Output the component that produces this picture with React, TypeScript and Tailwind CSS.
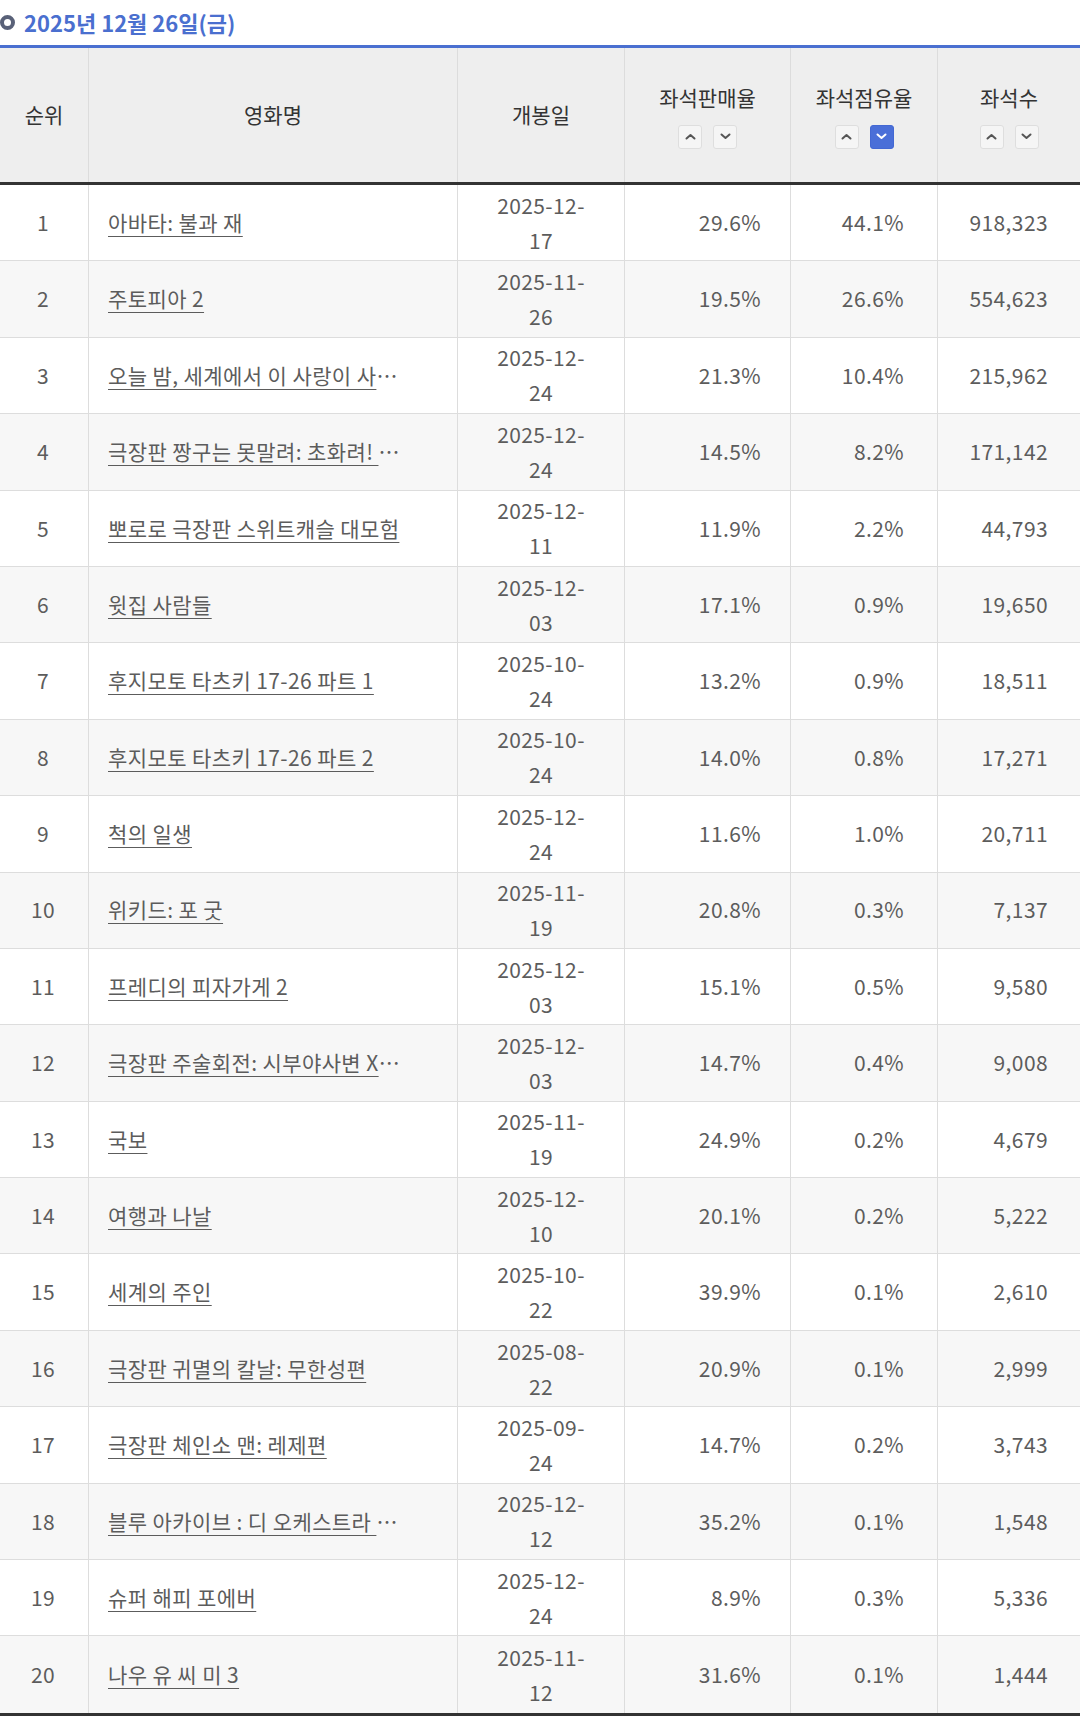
import React from "react";

type Row = {
  rank: number;
  title: string;
  cut?: boolean;
  date: string;
  sales: string;
  share: string;
  seats: string;
};

const ROWS: Row[] = [
  { rank: 1, title: "아바타: 불과 재", date: "2025-12-17", sales: "29.6%", share: "44.1%", seats: "918,323" },
  { rank: 2, title: "주토피아 2", date: "2025-11-26", sales: "19.5%", share: "26.6%", seats: "554,623" },
  { rank: 3, title: "오늘 밤, 세계에서 이 사랑이 사", cut: true, date: "2025-12-24", sales: "21.3%", share: "10.4%", seats: "215,962" },
  { rank: 4, title: "극장판 짱구는 못말려: 초화려! ", cut: true, date: "2025-12-24", sales: "14.5%", share: "8.2%", seats: "171,142" },
  { rank: 5, title: "뽀로로 극장판 스위트캐슬 대모험", date: "2025-12-11", sales: "11.9%", share: "2.2%", seats: "44,793" },
  { rank: 6, title: "윗집 사람들", date: "2025-12-03", sales: "17.1%", share: "0.9%", seats: "19,650" },
  { rank: 7, title: "후지모토 타츠키 17-26 파트 1", date: "2025-10-24", sales: "13.2%", share: "0.9%", seats: "18,511" },
  { rank: 8, title: "후지모토 타츠키 17-26 파트 2", date: "2025-10-24", sales: "14.0%", share: "0.8%", seats: "17,271" },
  { rank: 9, title: "척의 일생", date: "2025-12-24", sales: "11.6%", share: "1.0%", seats: "20,711" },
  { rank: 10, title: "위키드: 포 굿", date: "2025-11-19", sales: "20.8%", share: "0.3%", seats: "7,137" },
  { rank: 11, title: "프레디의 피자가게 2", date: "2025-12-03", sales: "15.1%", share: "0.5%", seats: "9,580" },
  { rank: 12, title: "극장판 주술회전: 시부야사변 X", cut: true, date: "2025-12-03", sales: "14.7%", share: "0.4%", seats: "9,008" },
  { rank: 13, title: "국보", date: "2025-11-19", sales: "24.9%", share: "0.2%", seats: "4,679" },
  { rank: 14, title: "여행과 나날", date: "2025-12-10", sales: "20.1%", share: "0.2%", seats: "5,222" },
  { rank: 15, title: "세계의 주인", date: "2025-10-22", sales: "39.9%", share: "0.1%", seats: "2,610" },
  { rank: 16, title: "극장판 귀멸의 칼날: 무한성편", date: "2025-08-22", sales: "20.9%", share: "0.1%", seats: "2,999" },
  { rank: 17, title: "극장판 체인소 맨: 레제편", date: "2025-09-24", sales: "14.7%", share: "0.2%", seats: "3,743" },
  { rank: 18, title: "블루 아카이브 : 디 오케스트라 ", cut: true, date: "2025-12-12", sales: "35.2%", share: "0.1%", seats: "1,548" },
  { rank: 19, title: "슈퍼 해피 포에버", date: "2025-12-24", sales: "8.9%", share: "0.3%", seats: "5,336" },
  { rank: 20, title: "나우 유 씨 미 3", date: "2025-11-12", sales: "31.6%", share: "0.1%", seats: "1,444" },
];

const COLS = "grid grid-cols-[89px_369px_167px_166px_147px_142px]";

function Caret({ down, active }: { down?: boolean; active?: boolean }) {
  return (
    <button
      type="button"
      className={`flex h-[24px] w-[24px] items-center justify-center rounded-[3px] border ${
        active ? "border-[#4368d3] bg-[#4a6fd8]" : "border-[#dedede] bg-[#f5f5f5]"
      }`}
    >
      <svg width="11" height="7" viewBox="0 0 11 7" fill="none">
        <path
          d={down ? "M1.5 1.5 L5.5 5 L9.5 1.5" : "M1.5 5.5 L5.5 2 L9.5 5.5"}
          stroke={active ? "#ffffff" : "#555555"}
          strokeWidth="2"
          strokeLinecap="round"
          strokeLinejoin="round"
        />
      </svg>
    </button>
  );
}

function SortHead({ label, active }: { label: string; active?: "up" | "down" }) {
  return (
    <div className="flex flex-col items-center justify-center border-r border-[#dcdcdc] last:border-r-0">
      <span className="leading-[30px]">{label}</span>
      <div className="mt-[13px] flex gap-[11px]">
        <Caret active={active === "up"} />
        <Caret down active={active === "down"} />
      </div>
    </div>
  );
}

export default function App() {
  return (
    <div className="w-[1080px] bg-white font-['Noto_Sans_CJK_KR',sans-serif] text-[21px] tracking-[0.4px] text-[#5c5c5c]">
      <div className="flex h-[45px] items-center gap-[9px]">
        <span className="h-[15px] w-[15px] shrink-0 rounded-full border-[4px] border-[#596178]" />
        <span className="text-[22px] font-semibold tracking-normal text-[#4a6fcf]">2025년 12월 26일(금)</span>
      </div>

      <div className={`${COLS} h-[140px] border-t-[3px] border-b-[3px] border-t-[#4a6fd0] border-b-[#333] bg-[#eeeeee] text-[#333] tracking-normal`}>
        <div className="flex items-center justify-center border-r border-[#dcdcdc]">순위</div>
        <div className="flex items-center justify-center border-r border-[#dcdcdc]">영화명</div>
        <div className="flex items-center justify-center border-r border-[#dcdcdc]">개봉일</div>
        <SortHead label="좌석판매율" />
        <SortHead label="좌석점유율" active="down" />
        <SortHead label="좌석수" />
      </div>

      <div className="border-b-[3px] border-[#333]">
        {ROWS.map((r, i) => (
          <div
            key={r.rank}
            className={`${COLS} h-[76.4px] ${i % 2 ? "bg-[#f7f7f7]" : "bg-white"} ${
              i < ROWS.length - 1 ? "border-b border-[#dddddd]" : ""
            }`}
          >
            <div className="flex items-center justify-center border-r border-[#dddddd] pr-[2px]">{r.rank}</div>
            <div className="flex items-center overflow-hidden whitespace-pre border-r border-[#dddddd] pl-[19px]">
              <a href="#" className="underline decoration-1 underline-offset-[5px]">
                {r.title}
              </a>
              {r.cut && <span>…</span>}
            </div>
            <div className="flex flex-col items-center justify-center border-r border-[#dddddd] leading-[35px]">
              <span>{r.date.slice(0, 8)}</span>
              <span>{r.date.slice(8)}</span>
            </div>
            <div className="flex items-center justify-end border-r border-[#dddddd] pr-[29px]">{r.sales}</div>
            <div className="flex items-center justify-end border-r border-[#dddddd] pr-[33px]">{r.share}</div>
            <div className="flex items-center justify-end pr-[32px]">{r.seats}</div>
          </div>
        ))}
      </div>
    </div>
  );
}
